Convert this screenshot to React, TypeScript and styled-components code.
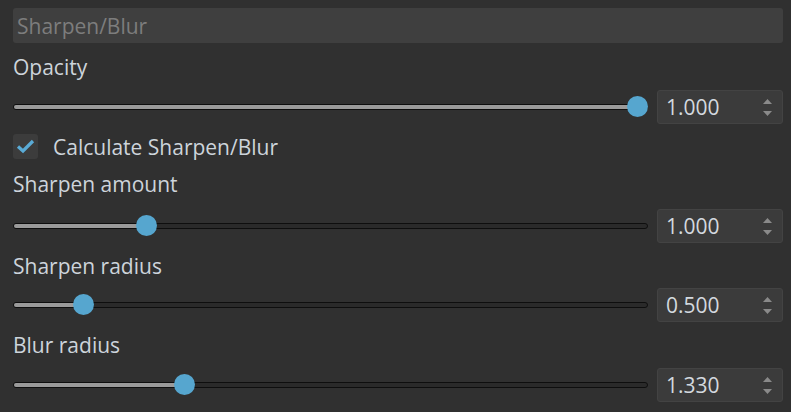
import styled, { createGlobalStyle } from "styled-components";

const GlobalStyle = createGlobalStyle`
  html, body, #root {
    margin: 0;
    height: 100%;
    background: #303030;
  }
  body {
    font-family: "Open Sans", "Noto Sans", sans-serif;
  }
`;

const Panel = styled.div`
  display: flex;
  flex-direction: column;
  padding: 8px 8px 0 13px;
  box-sizing: border-box;
  width: 791px;
  height: 412px;
  background: #303030;
`;

const NameField = styled.div`
  height: 35px;
  box-sizing: border-box;
  display: flex;
  align-items: center;
  padding-left: 4px;
  background: #3f3f3f;
  border-radius: 3px;
  color: #7d7d7d;
  font-size: 21px;
`;

const Label = styled.div<{ $h: number }>`
  height: ${(p) => p.$h}px;
  display: flex;
  align-items: center;
  color: #cdd4db;
  font-size: 21px;
`;

const Row = styled.div`
  display: flex;
  align-items: center;
  gap: 9px;
  height: 34px;
`;

const Track = styled.div`
  position: relative;
  flex: 1;
  height: 22px;
`;

const Groove = styled.div`
  position: absolute;
  left: 0;
  right: 0;
  top: 8px;
  height: 6px;
  box-sizing: border-box;
  border: 1px solid #0e0e0e;
  border-radius: 3px;
  background: #2a2a2a;
  overflow: hidden;
`;

const Fill = styled.div`
  height: 100%;
  background: #9a9a9a;
`;

const Handle = styled.div`
  position: absolute;
  top: 0;
  width: 21px;
  height: 21px;
  border-radius: 50%;
  background: #56a6cf;
`;

const SpinBox = styled.div`
  width: 126px;
  height: 34px;
  box-sizing: border-box;
  display: flex;
  align-items: center;
  justify-content: space-between;
  padding: 0 10px 0 8px;
  background: #3b3b3b;
  border: 1px solid #434343;
  border-radius: 3px;
  color: #d3d9df;
  font-size: 21px;
`;

const Arrows = styled.div`
  display: flex;
  flex-direction: column;
  gap: 7px;
`;

const CheckRow = styled.div`
  display: flex;
  align-items: center;
  gap: 15px;
  height: 25px;
  margin-top: 10px;
  color: #cdd4db;
  font-size: 21px;
`;

const CheckBox = styled.div`
  width: 25px;
  height: 25px;
  box-sizing: border-box;
  border-radius: 3px;
  background: #3c3c3c;
  display: flex;
  align-items: center;
  justify-content: center;
`;

const TRACK_W = 635;
const HANDLE = 21;

const Slider = ({ fraction }: { fraction: number }) => {
  const left = fraction * (TRACK_W - HANDLE);
  return (
    <Track>
      <Groove>
        <Fill style={{ width: left + HANDLE / 2 }} />
      </Groove>
      <Handle style={{ left }} />
    </Track>
  );
};

const Spin = ({ value }: { value: string }) => (
  <SpinBox>
    <span>{value}</span>
    <Arrows>
      <svg width="9" height="5" viewBox="0 0 9 5">
        <path d="M0 5 L4.5 0 L9 5 Z" fill="#8a8a8a" />
      </svg>
      <svg width="9" height="5" viewBox="0 0 9 5">
        <path d="M0 0 L4.5 5 L9 0 Z" fill="#8a8a8a" />
      </svg>
    </Arrows>
  </SpinBox>
);

const ParamRow = ({ fraction, value }: { fraction: number; value: string }) => (
  <Row>
    <Slider fraction={fraction} />
    <Spin value={value} />
  </Row>
);

const App = (): JSX.Element => (
  <>
    <GlobalStyle />
    <Panel>
      <NameField>Sharpen/Blur</NameField>
      <Label $h={47}>Opacity</Label>
      <ParamRow fraction={1} value="1.000" />
      <CheckRow>
        <CheckBox>
          <svg width="19" height="15" viewBox="0 0 19 15">
            <path
              d="M2 7.5 L7 12 L17 2"
              fill="none"
              stroke="#5aabd6"
              strokeWidth="3.2"
            />
          </svg>
        </CheckBox>
        Calculate Sharpen/Blur
      </CheckRow>
      <Label $h={50}>Sharpen amount</Label>
      <ParamRow fraction={0.2} value="1.000" />
      <Label $h={45}>Sharpen radius</Label>
      <ParamRow fraction={0.098} value="0.500" />
      <Label $h={46}>Blur radius</Label>
      <ParamRow fraction={0.263} value="1.330" />
    </Panel>
  </>
);

export default App;
